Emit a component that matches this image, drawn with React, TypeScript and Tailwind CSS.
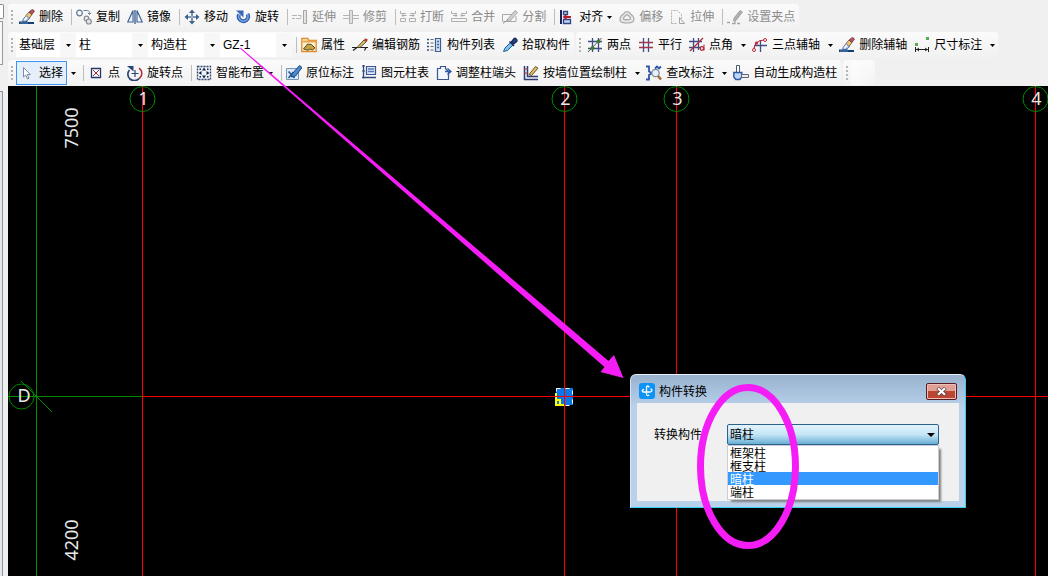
import type { ReactNode } from "react";

interface IconProps {
  children: ReactNode;
}

function Icon({ children }: IconProps) {
  return (
    <svg className="size-4 shrink-0" viewBox="0 0 16 16" fill="none" aria-hidden="true">
      {children}
    </svg>
  );
}

const BrushIcon = () => (
  <Icon>
    <path d="M0 12.500h4v-1h3l2 1.500h6v2H0z" fill="#123f74" />
    <path d="M1 14h8" stroke="#5b87b8" />
    <path d="M3.500 12.500C4 9.500 6 8 7.500 6.500l3 3C8.500 12 6.500 13 3.500 12.500z" fill="#b9cdf0" stroke="#3a5c98" strokeWidth=".8" />
    <path d="M7 6.500l3-3.500 3 2.500L10 9.500z" fill="#efc95f" stroke="#5c4a6a" strokeWidth=".8" />
    <path d="M10 3l3.500-2.700 2 1.700L13 5.500z" fill="#c0504f" stroke="#55304f" strokeWidth=".7" />
    <path d="M5.500 11l2.500-3" stroke="#fff" strokeWidth="1.300" />
  </Icon>
);

const CopyIcon = () => (
  <Icon>
    <circle cx="3.500" cy="4" r="2.800" fill="#f6f8fa" stroke="#5b7493" strokeWidth="1.200" />
    <circle cx="10.500" cy="9.500" r="2.300" fill="#eee" stroke="#868b93" strokeWidth="1.200" />
    <circle cx="12.800" cy="12.500" r="2.500" fill="#e3e3e3" stroke="#868b93" strokeWidth="1.200" />
    <path d="M7.500 1.500h4c1.500 0 2 1 2 3.500M11.800 3.800l1.700 1.700 1.700-1.700" stroke="#6d7f93" />
  </Icon>
);

const MirrorIcon = () => (
  <Icon>
    <path d="M6 1.500v11.500H.8zM10 1.500v11.500h5.200z" fill="#f4f8ff" stroke="#3f649a" strokeWidth="1.200" />
    <path d="M8 1v14" stroke="#2b4a7b" strokeWidth="1.200" />
  </Icon>
);

const MoveIcon = () => (
  <Icon>
    <path d="M8 2v12M2 8h12" stroke="#4b6a8e" strokeWidth="2" />
    <path d="M8 .5l3 3.500H5zM8 15.500L11 12H5zM.5 8L4 5v6zM15.500 8L12 5v6z" fill="#3c5f86" />
    <path d="M8 4v8M4 8h8" stroke="#c9d8ea" strokeWidth=".8" />
  </Icon>
);

const RotateIcon = () => (
  <Icon>
    <path d="M4 5.500a4.800 4.800 0 1 0 8.500-.5" stroke="#2d57a8" strokeWidth="3.800" />
    <path d="M4 5.500a4.800 4.800 0 1 0 8.500-.5" stroke="#7ba7ea" strokeWidth="1.500" />
    <path d="M1 1.500h7.500v7z" fill="#3a67bb" />
  </Icon>
);

const ExtendIcon = () => (
  <Icon>
    <path d="M0 6.500h9v3H0" stroke="#b5b5b5" strokeDasharray="5 1" />
    <path d="M11.500 1.500h3v13h-3z" fill="#e4e4e4" stroke="#a5a5a5" />
  </Icon>
);

const TrimIcon = () => (
  <Icon>
    <path d="M0 6.500h6M0 9.500h6M10 6.500h6M10 9.500h6" stroke="#b5b5b5" />
    <path d="M6.500 1.500h3v13h-3z" fill="#e0e0e0" stroke="#b0b0b0" />
  </Icon>
);

const BreakIcon = () => (
  <Icon>
    <path d="M.5 2v2.500H6M15.500 2v2.500H10M.5 9.500h5v3h-5zM9.500 9.500h6v3h-6z" stroke="#b0b0b0" />
    <path d="M6.500 6.500H2M3.500 5L2 6.500 3.500 8M9.500 6.500H14M12.500 5L14 6.500 12.500 8" stroke="#aaa" />
  </Icon>
);

const MergeIcon = () => (
  <Icon>
    <path d="M.5 2v2.500H6M15.500 2v2.500H10M.5 9.500h15v3H.5z" stroke="#b0b0b0" />
    <path d="M2 6.500h4M4.500 5L6 6.500 4.500 8M14 6.500h-4M11.500 5L10 6.500 11.500 8" stroke="#aaa" />
  </Icon>
);

const SplitIcon = () => (
  <Icon>
    <path d="M.5 12V5.500H10M.5 12.500H14V7" stroke="#aaa" />
    <path d="M5 11l8-9.500 2.500 2L7.500 12.500z" fill="#cfcfcf" stroke="#999" strokeWidth=".8" />
    <path d="M1 14.500l5-4" stroke="#999" />
  </Icon>
);

const AlignIcon = () => (
  <Icon>
    <path d="M2 1v14" stroke="#16235a" strokeWidth="2" />
    <path d="M4.500 2.500h4v3h-4zM4.500 10.500h7v4h-7z" stroke="#2c4583" strokeWidth="1.300" fill="#c3d3f1" />
    <path d="M12 8H7" stroke="#b01d2b" strokeWidth="2" />
    <path d="M3.500 8l4-3v6z" fill="#b01d2b" />
  </Icon>
);

const OffsetIcon = () => (
  <Icon>
    <path
      d="M4.500 5a3.800 3.800 0 0 1 7 0C14 6.500 15.500 9 14.500 12 13.500 14 11 14 8 14s-6 0-6.700-2C.5 9 2 6.500 4.500 5z"
      fill="#e6e6e6"
      stroke="#aaa"
      strokeWidth="1.200"
    />
    <path
      d="M6.300 7a2 2 0 0 1 3.500 0c1.500 1 2 2 1.700 3-.7 1-6 1-7 0-.4-1 .3-2 1.800-3z"
      fill="#f6f6f6"
      stroke="#aaa"
      strokeWidth="1.300"
    />
  </Icon>
);

const StretchIcon = () => (
  <Icon>
    <path d="M1.500 14.500v-13h6l4 4v4M1.500 14.500h5" stroke="#b0b0b0" strokeDasharray="2 1" />
    <path d="M9.500 8.500v6h5z" stroke="#a5a5a5" />
  </Icon>
);

const GripEditIcon = () => (
  <Icon>
    <path d="M0 13.500h3M5 14.500h3v-3M10 14.500h3" stroke="#a5a5a5" strokeWidth="1.300" />
    <path d="M7 9l6-7.500L15.500 3 9.500 11 6.500 12z" fill="#b0b0b0" stroke="#959595" strokeWidth=".7" />
  </Icon>
);

const PropertyIcon = () => (
  <Icon>
    <path d="M.8 1.500h6l1 2h7.400v11H.8z" fill="#fff3d4" stroke="#e08a2b" strokeWidth="1.300" />
    <path d="M1.500 4.500h13" stroke="#e9a44b" strokeWidth="2" />
    <path d="M2.500 12l4-5 4 .5 3.500 3.500-2.500 2-2.500-1-2 1.300z" fill="#c0a449" stroke="#4f4215" strokeWidth=".9" />
  </Icon>
);

const RebarIcon = () => (
  <Icon>
    <path d="M0 10.500h16M1 13.500l4-3M12.500 13.500l1.500-3" stroke="#1e1e1e" strokeWidth="1.200" />
    <path d="M5 10.500L12 3l2.500 1.500L8 10.500z" fill="#e0c070" stroke="#4d3519" strokeWidth=".9" />
    <path d="M12 3l1.300-1.800L16 2.800l-1.500 1.700z" fill="#b33" />
  </Icon>
);

const ListIcon = () => (
  <Icon>
    <path d="M0 2.500h2M0 6h2M0 9.500h2M0 13h2" stroke="#30507f" strokeWidth="1.500" />
    <path d="M3.500 2.500h3M3.500 6h3M3.500 9.500h3M3.500 13h3" stroke="#666" />
    <path d="M8.500 1.500h5v13h-5z" fill="#d5e2f6" stroke="#3c5c92" strokeWidth="1.200" />
    <path d="M10 4.500h2M10 7.500h2M10 10.500h2" stroke="#4167a3" strokeWidth="1.300" />
  </Icon>
);

const PickerIcon = () => (
  <Icon>
    <path d="M1.500 14.500L3 11l5.500-5.500L11 8l-5.500 5.500z" fill="#7cc0ee" stroke="#1f5f96" />
    <path d="M7.500 4.500l4.500 4.500M9.500 5L12 1.700c1.200-1 3.500.8 2.800 2.600L11.500 7z" fill="#24468a" stroke="#1b2e60" strokeWidth="1.500" />
  </Icon>
);

const TwoPointIcon = () => (
  <Icon>
    <path d="M5.500 1v14M11.500 1v14M1 4.500h14M1 11.500h14" stroke="#3f4d86" strokeWidth="1.300" />
    <path d="M1 15L14.500 1" stroke="#555" />
    <circle cx="5.500" cy="11" r="2" fill="#3f7d2c" />
    <circle cx="11.500" cy="4.500" r="2" fill="#3f7d2c" />
  </Icon>
);

const ParallelIcon = () => (
  <Icon>
    <path d="M5.500 1v14M10.500 1v14" stroke="#3f4d86" strokeWidth="1.300" />
    <path d="M1 5.500h14M1 10.500h14" stroke="#a3344a" strokeWidth="1.300" />
  </Icon>
);

const PointAngleIcon = () => (
  <Icon>
    <path d="M4.500 1v14M9.500 1v12M0 4.500h13M0 10.500h11" stroke="#3f4d86" strokeWidth="1.300" />
    <path d="M1 14L14 1" stroke="#b8293a" strokeWidth="1.300" />
    <circle cx="13" cy="11.500" r="1.800" fill="#f7dfe2" stroke="#b8293a" strokeWidth="1.300" />
    <path d="M15 7.500v6" stroke="#b8293a" />
  </Icon>
);

const ThreePointIcon = () => (
  <Icon>
    <path d="M8.500 3v12M3 8.500h12" stroke="#3f4d86" strokeWidth="1.300" />
    <path d="M2 13C2 7 6 3 13 3" stroke="#b8293a" strokeWidth="1.200" />
    <circle cx="2" cy="13" r="1.500" fill="#fff" stroke="#b8293a" />
    <circle cx="4.500" cy="6" r="1.600" fill="#b8293a" />
    <circle cx="13" cy="3" r="1.500" fill="#fff" stroke="#b8293a" />
  </Icon>
);

const DimensionIcon = () => (
  <Icon>
    <path d="M1 6h3v3H1zM12 0h3v3h-3z" fill="#4fae4a" />
    <path d="M1.500 10v5M14.500 10v5M2 12.500h12M5 11l-2 1.500L5 14M11 11l2 1.500-2 1.500" stroke="#222" />
  </Icon>
);

const CursorIcon = () => (
  <Icon>
    <path d="M4.500 2.500v9.500l2.200-2 1.800 4 1.500-.7-1.700-3.800h3z" fill="#fff" stroke="#7b8aa5" />
  </Icon>
);

const PointIcon = () => (
  <Icon>
    <path d="M3.500 3.500h9v9h-9z" fill="#fff" stroke="#25366b" strokeWidth="1.300" />
    <path d="M5 5l6 6M11 5l-6 6" stroke="#8d2c46" />
    <path d="M7 7h2v2H7z" fill="#b01d2b" />
  </Icon>
);

const RotatePointIcon = () => (
  <Icon>
    <path d="M2.500 5A6.300 6.300 0 0 0 12 13.500" stroke="#2c4478" strokeWidth="1.700" />
    <path d="M12 13.500A6.300 6.300 0 0 0 12 3" stroke="#b8293a" strokeWidth="1.500" />
    <path d="M0 1h6.500v5.500z" fill="#2c4478" />
    <path d="M8 5v7M4.500 8.500h7" stroke="#2c4478" strokeWidth="1.200" />
  </Icon>
);

const SmartIcon = () => (
  <Icon>
    <path d="M1.500 1.500h13v13h-13z" fill="#eef3fb" stroke="#30466f" strokeDasharray="2 1" strokeWidth="1.300" />
    <path
      d="M8 2.500L10 5.500H6zM8 13.500l2-3H6zM2.500 8l3-2v4zM13.500 8l-3-2v4z"
      fill="#15233f"
    />
    <path d="M3.500 3.500h1.500V5H3.500zM11 3.500h1.500V5H11zM3.500 11h1.500v1.500H3.500zM11 11h1.500v1.500H11z" fill="#15233f" />
  </Icon>
);

const InPlaceIcon = () => (
  <Icon>
    <path d="M.5 3.500h12v11H.5z" fill="#dbe9f8" stroke="#7594b8" />
    <path d="M2.500 6.500l6 6.500M2.500 13l5-6" stroke="#355e94" strokeWidth="1.800" />
    <path d="M6 9l7.500-8.500L16 2.500 9.500 11 5.500 12z" fill="#4a8bd2" stroke="#1d4680" />
  </Icon>
);

const TableIcon = () => (
  <Icon>
    <path d="M2.500 0v13.500M1 12.500h14" stroke="#33477c" strokeWidth="1.300" />
    <path d="M5.500 1.500h9v8h-9z" fill="#dfe8f8" stroke="#3a5592" strokeWidth="1.200" />
    <path d="M7 4h6M7 6.500h6" stroke="#5a78b5" strokeWidth="1.300" />
    <path d="M1 1h3M1 6h3" stroke="#33477c" />
  </Icon>
);

const AdjustIcon = () => (
  <Icon>
    <path d="M1.500 14.500v-11h3v-2h5v2l3 3v8z" fill="#f2f6fd" stroke="#3a5592" strokeWidth="1.200" />
    <path d="M9 6.500h5M11.500 3.500l3.500 3-3.500 3" stroke="#2f57a5" strokeWidth="1.300" />
  </Icon>
);

const WallIcon = () => (
  <Icon>
    <path d="M1.500 1v14M4.500 1v10.500H15M1 14.500h14" stroke="#2c3f75" strokeWidth="1.500" />
    <path d="M6 9.500L12.500 1.500 15 3.200 8.500 10.500z" fill="#e0c060" stroke="#5d4319" strokeWidth=".9" />
    <path d="M1.500 4h3M1.500 8h3" stroke="#c33" />
  </Icon>
);

const CheckLabelIcon = () => (
  <Icon>
    <path d="M0 1.500h3v5l3 1.500M0 14.500h3V10l3-2M9 3.500l2-2 2 2 2-2" stroke="#2f57a5" strokeWidth="1.800" />
    <circle cx="9.500" cy="8" r="3.700" fill="#e6f0fb" stroke="#7d8796" strokeWidth="1.200" />
    <path d="M12 11l3 3.500" stroke="#a36a2d" strokeWidth="2.500" />
  </Icon>
);

const GenerateIcon = () => (
  <Icon>
    <path d="M3.500.5h3v8h-3z" fill="#fff" stroke="#4d5b70" />
    <path d="M.8 7.500h8v4.500l-2 2.500h-4l-2-2.500z" fill="#bcd6f5" stroke="#2f57a5" strokeWidth="1.400" />
    <path d="M8.500 9.500h7v3h-7z" fill="#eee" stroke="#5b6677" />
  </Icon>
);

function Arrow() {
  return (
    <svg className="h-[3px] w-[5px] shrink-0" viewBox="0 0 5 3" aria-hidden="true">
      <path d="M0 0h5L2.500 3z" fill="#000" />
    </svg>
  );
}

function Separator() {
  return <div className="mr-px ml-1 h-4 w-px shrink-0 bg-[#bdbdbd]" />;
}

interface ToolProps {
  icon: ReactNode;
  label: string;
  disabled?: boolean;
  menu?: boolean;
}

function Tool({ icon, label, disabled, menu }: ToolProps) {
  return (
    <button
      type="button"
      disabled={disabled}
      className="flex h-6 shrink-0 items-center gap-1 pr-1 pl-[3px] whitespace-nowrap text-black disabled:text-[#8c8c8c]"
    >
      {icon}
      <span>{label}</span>
      {menu && <Arrow />}
    </button>
  );
}

function MenuButton({ label }: { label: string }) {
  return (
    <button type="button" aria-label={label} className="flex h-6 w-3 shrink-0 items-center justify-center">
      <Arrow />
    </button>
  );
}

interface ComboProps {
  label: string;
  value: string;
  narrow?: boolean;
}

function Combo({ label, value, narrow }: ComboProps) {
  return (
    <label className={`relative flex shrink-0 items-center bg-white ${narrow ? "w-[60px]" : "w-[72px]"}`}>
      <select aria-label={label} className="h-6 w-full appearance-none bg-white pl-[3px] text-black outline-none">
        <option>{value}</option>
      </select>
      <span className="pointer-events-none absolute inset-y-0 right-0 flex w-4 items-center justify-center bg-[#f7f7f7]">
        <Arrow />
      </span>
    </label>
  );
}

function Strip({ children }: { children?: ReactNode }) {
  return (
    <div className="flex h-[26px] shrink-0 items-center rounded-sm bg-linear-to-b from-[#fbfbfb] to-[#f1f1f1]">
      <div className="flex w-2 shrink-0 flex-col items-center gap-[2px]">
        <span className="size-[2px] bg-[#b4b4b4]" />
        <span className="size-[2px] bg-[#b4b4b4]" />
        <span className="size-[2px] bg-[#b4b4b4]" />
        <span className="size-[2px] bg-[#b4b4b4]" />
      </div>
      {children}
    </div>
  );
}

function Toolbars() {
  return (
    <header className="flex flex-col gap-[2px] pt-1 text-[12px] leading-4">
      <div className="flex gap-[2px]">
        <Strip>
          <Tool icon={<BrushIcon />} label="删除" />
          <Separator />
          <Tool icon={<CopyIcon />} label="复制" />
          <Tool icon={<MirrorIcon />} label="镜像" />
          <Separator />
          <Tool icon={<MoveIcon />} label="移动" />
          <Tool icon={<RotateIcon />} label="旋转" />
          <Separator />
          <Tool icon={<ExtendIcon />} label="延伸" disabled />
          <Tool icon={<TrimIcon />} label="修剪" disabled />
          <Separator />
          <Tool icon={<BreakIcon />} label="打断" disabled />
          <Tool icon={<MergeIcon />} label="合并" disabled />
          <Tool icon={<SplitIcon />} label="分割" disabled />
          <Separator />
          <Tool icon={<AlignIcon />} label="对齐" menu />
          <Tool icon={<OffsetIcon />} label="偏移" disabled />
          <Tool icon={<StretchIcon />} label="拉伸" disabled />
          <Separator />
          <Tool icon={<GripEditIcon />} label="设置夹点" disabled />
        </Strip>
      </div>

      <div className="flex gap-[2px]">
        <Strip>
          <Combo label="楼层" value="基础层" narrow />
          <Combo label="构件类型" value="柱" />
          <Combo label="构件类别" value="构造柱" />
          <Combo label="构件名称" value="GZ-1" />
          <Separator />
          <Tool icon={<PropertyIcon />} label="属性" />
          <Tool icon={<RebarIcon />} label="编辑钢筋" />
          <Tool icon={<ListIcon />} label="构件列表" />
          <Tool icon={<PickerIcon />} label="拾取构件" />
        </Strip>
        <Strip>
          <Tool icon={<TwoPointIcon />} label="两点" />
          <Tool icon={<ParallelIcon />} label="平行" />
          <Tool icon={<PointAngleIcon />} label="点角" />
          <MenuButton label="点角选项" />
          <Tool icon={<ThreePointIcon />} label="三点辅轴" />
          <MenuButton label="三点辅轴选项" />
          <Tool icon={<BrushIcon />} label="删除辅轴" />
          <Tool icon={<DimensionIcon />} label="尺寸标注" />
          <MenuButton label="尺寸标注选项" />
        </Strip>
      </div>

      <div className="flex gap-[2px]">
        <Strip>
          <div className="bg-[#e5effa] outline outline-[#3d94f5] -outline-offset-1">
            <Tool icon={<CursorIcon />} label="选择" />
          </div>
          <MenuButton label="选择选项" />
          <Separator />
          <Tool icon={<PointIcon />} label="点" />
          <Tool icon={<RotatePointIcon />} label="旋转点" />
          <Separator />
          <Tool icon={<SmartIcon />} label="智能布置" menu />
          <Separator />
          <Tool icon={<InPlaceIcon />} label="原位标注" />
          <Tool icon={<TableIcon />} label="图元柱表" />
          <Tool icon={<AdjustIcon />} label="调整柱端头" />
          <Tool icon={<WallIcon />} label="按墙位置绘制柱" />
          <MenuButton label="绘制选项" />
          <Tool icon={<CheckLabelIcon />} label="查改标注" />
          <MenuButton label="查改标注选项" />
          <Tool icon={<GenerateIcon />} label="自动生成构造柱" />
        </Strip>
        <Strip>
          <div className="h-6 w-6 bg-linear-to-r from-white/60 to-transparent" />
        </Strip>
      </div>
    </header>
  );
}

const axes = [
  { x: 134.5, name: "1" },
  { x: 556.5, name: "2" },
  { x: 668.5, name: "3" },
  { x: 1027.5, name: "4" },
];

function Drawing() {
  return (
    <svg className="block min-h-0 w-full flex-1 bg-black" fontFamily='"Noto Sans", sans-serif' fontSize="18">
      <g stroke="#008a00" fill="none">
        <path d="M28.500 0V2000M0 310.500H134M13 295l31 31" />
        <circle cx="13.500" cy="310.500" r="12.500" />
      </g>
      <path d="M134 310.500H4000" stroke="#f00" />
      {axes.map((axis) => (
        <g key={axis.name}>
          <path d={`M${axis.x} 0V2000`} stroke="#f00" />
          <circle cx={axis.x} cy="13" r="12.500" stroke="#008a00" fill="none" />
          <text x={axis.x + 1} y="19" textAnchor="middle" fill="#e8e8e8">
            {axis.name}
          </text>
        </g>
      ))}
      <text x="16" y="316" textAnchor="middle" fill="#e8e8e8">
        D
      </text>
      <text transform="translate(70 42) rotate(-90)" textAnchor="middle" fill="#e8e8e8">
        7500
      </text>
      <text transform="translate(70 454) rotate(-90)" textAnchor="middle" fill="#e8e8e8">
        4200
      </text>

      {/* selected column */}
      <path d="M548 302h17v17h-17z" fill="#0a78e8" />
      <path d="M548.500 302.500h16v17h-16z" fill="none" stroke="#fff" strokeDasharray="4 5" />
      <path d="M548 307v12h9M548 314h4v5" fill="none" stroke="#ff0" strokeWidth="2" />
      <path d="M556.500 298v26M545 310.500h24" stroke="#f00" />
    </svg>
  );
}

const columnTypes = ["框架柱", "框支柱", "暗柱", "端柱"];

function ConvertDialog() {
  return (
    <section
      role="dialog"
      aria-label="构件转换"
      className="absolute top-[374px] left-[630px] w-[336px] rounded-t-md border border-t-[#e8f0f8] border-r-[#35d0ee] border-b-[#35d0ee] border-l-[#d5e4f4] bg-linear-to-b from-[#98b2cf] to-[#b9d1ea] to-25% px-[6px] pb-[6px] text-[12px] leading-4 text-black"
    >
      <div className="flex h-7 items-center gap-1 pt-1 pl-[2px]">
        <svg className="size-4" viewBox="0 0 16 16" fill="none" aria-hidden="true">
          <rect width="16" height="16" rx="3" fill="#0b93f6" />
          <path
            d="M10 4.500C10 2.500 7.500 2.500 7.500 4.500V11c0 2 2 2 2.500.8M5 6.500C3 6.500 2.500 9 4.500 9H11c2.500 0 2.500-3 .5-3"
            stroke="#fff"
            strokeWidth="1.300"
          />
        </svg>
        <h2 className="pt-[2px]">构件转换</h2>
        <button
          type="button"
          aria-label="关闭"
          className="mr-[2px] ml-auto flex h-[17px] w-[31px] items-center justify-center rounded-xs border border-[#5a1a1f] bg-linear-to-b from-[#e0a095] from-50% to-[#bd4632] to-50% shadow-[inset_0_0_0_1px_#ecc0b8]"
        >
          <svg className="h-[9px] w-[11px]" viewBox="0 0 11 9" aria-hidden="true">
            <path d="M1.500 1l8 7M9.500 1l-8 7" stroke="#5c4448" strokeWidth="3.600" />
            <path d="M2 1.300l7 6.400M9 1.300L2 7.700" stroke="#fff" strokeWidth="2.200" />
          </svg>
        </button>
      </div>

      <div className="flex h-[98px] items-start bg-[#f0f0f0] pt-[21px] pr-5 pl-[17px]">
        <label htmlFor="column-type" className="w-[73px] pt-[3px]">
          转换构件:
        </label>
        <div className="relative flex-1">
          <select
            id="column-type"
            defaultValue="暗柱"
            className="block h-[21px] w-full appearance-none rounded-xs border border-[#2c628b] bg-linear-to-b from-[#e4f3fb] via-[#c4e5f6] via-50% to-[#68aed4] pt-px pl-[2px] outline-none"
          >
            {columnTypes.map((type) => (
              <option key={type}>{type}</option>
            ))}
          </select>
          <svg
            className="pointer-events-none absolute top-[9px] right-1 h-1 w-2"
            viewBox="0 0 8 4"
            aria-hidden="true"
          >
            <path d="M0 0h8L4 4z" fill="#000" />
          </svg>
          <ul
            role="listbox"
            aria-label="转换构件"
            className="absolute top-full right-0 left-0 border border-[#c8ccd4] bg-white pb-px shadow-[3px_3px_2px_-1px_#808080]"
          >
            {columnTypes.map((type) => (
              <li
                key={type}
                role="option"
                aria-selected={type === "暗柱"}
                className="h-[13px] pl-[2px] leading-4 aria-selected:bg-[#3399ff] aria-selected:text-white"
              >
                {type}
              </li>
            ))}
          </ul>
        </div>
      </div>
    </section>
  );
}

function Annotations() {
  return (
    <svg className="pointer-events-none absolute inset-0 size-full" aria-hidden="true">
      <path d="M240.500 47.500L608.500 361 614 355l9.500 23-23-6 4-5L240 48.500z" fill="#f51df5" />
      <ellipse cx="748" cy="466.500" rx="47.500" ry="79" fill="none" stroke="#f51df5" strokeWidth="7" />
    </svg>
  );
}

export default function App() {
  return (
    <div className='relative flex h-screen overflow-hidden bg-[#f0f0f0] font-["Liberation_Sans","Noto_Sans_CJK_SC",sans-serif]'>
      <aside className="flex w-2 shrink-0 flex-col gap-[2px] pt-1">
        <div className="h-[15px] w-1 rounded-r-xs border border-l-0 border-[#8c8c8c] bg-white" />
        <div className="h-11 w-[3px] border border-l-0 border-[#9a9a9a] bg-[#f7f7f7]" />
        <div className="mt-6 w-[3px] flex-1 border-t border-r border-[#8d939c] bg-[#e4e7ec]" />
      </aside>
      <main className="flex min-w-0 flex-1 flex-col">
        <Toolbars />
        <Drawing />
      </main>
      <ConvertDialog />
      <Annotations />
    </div>
  );
}
